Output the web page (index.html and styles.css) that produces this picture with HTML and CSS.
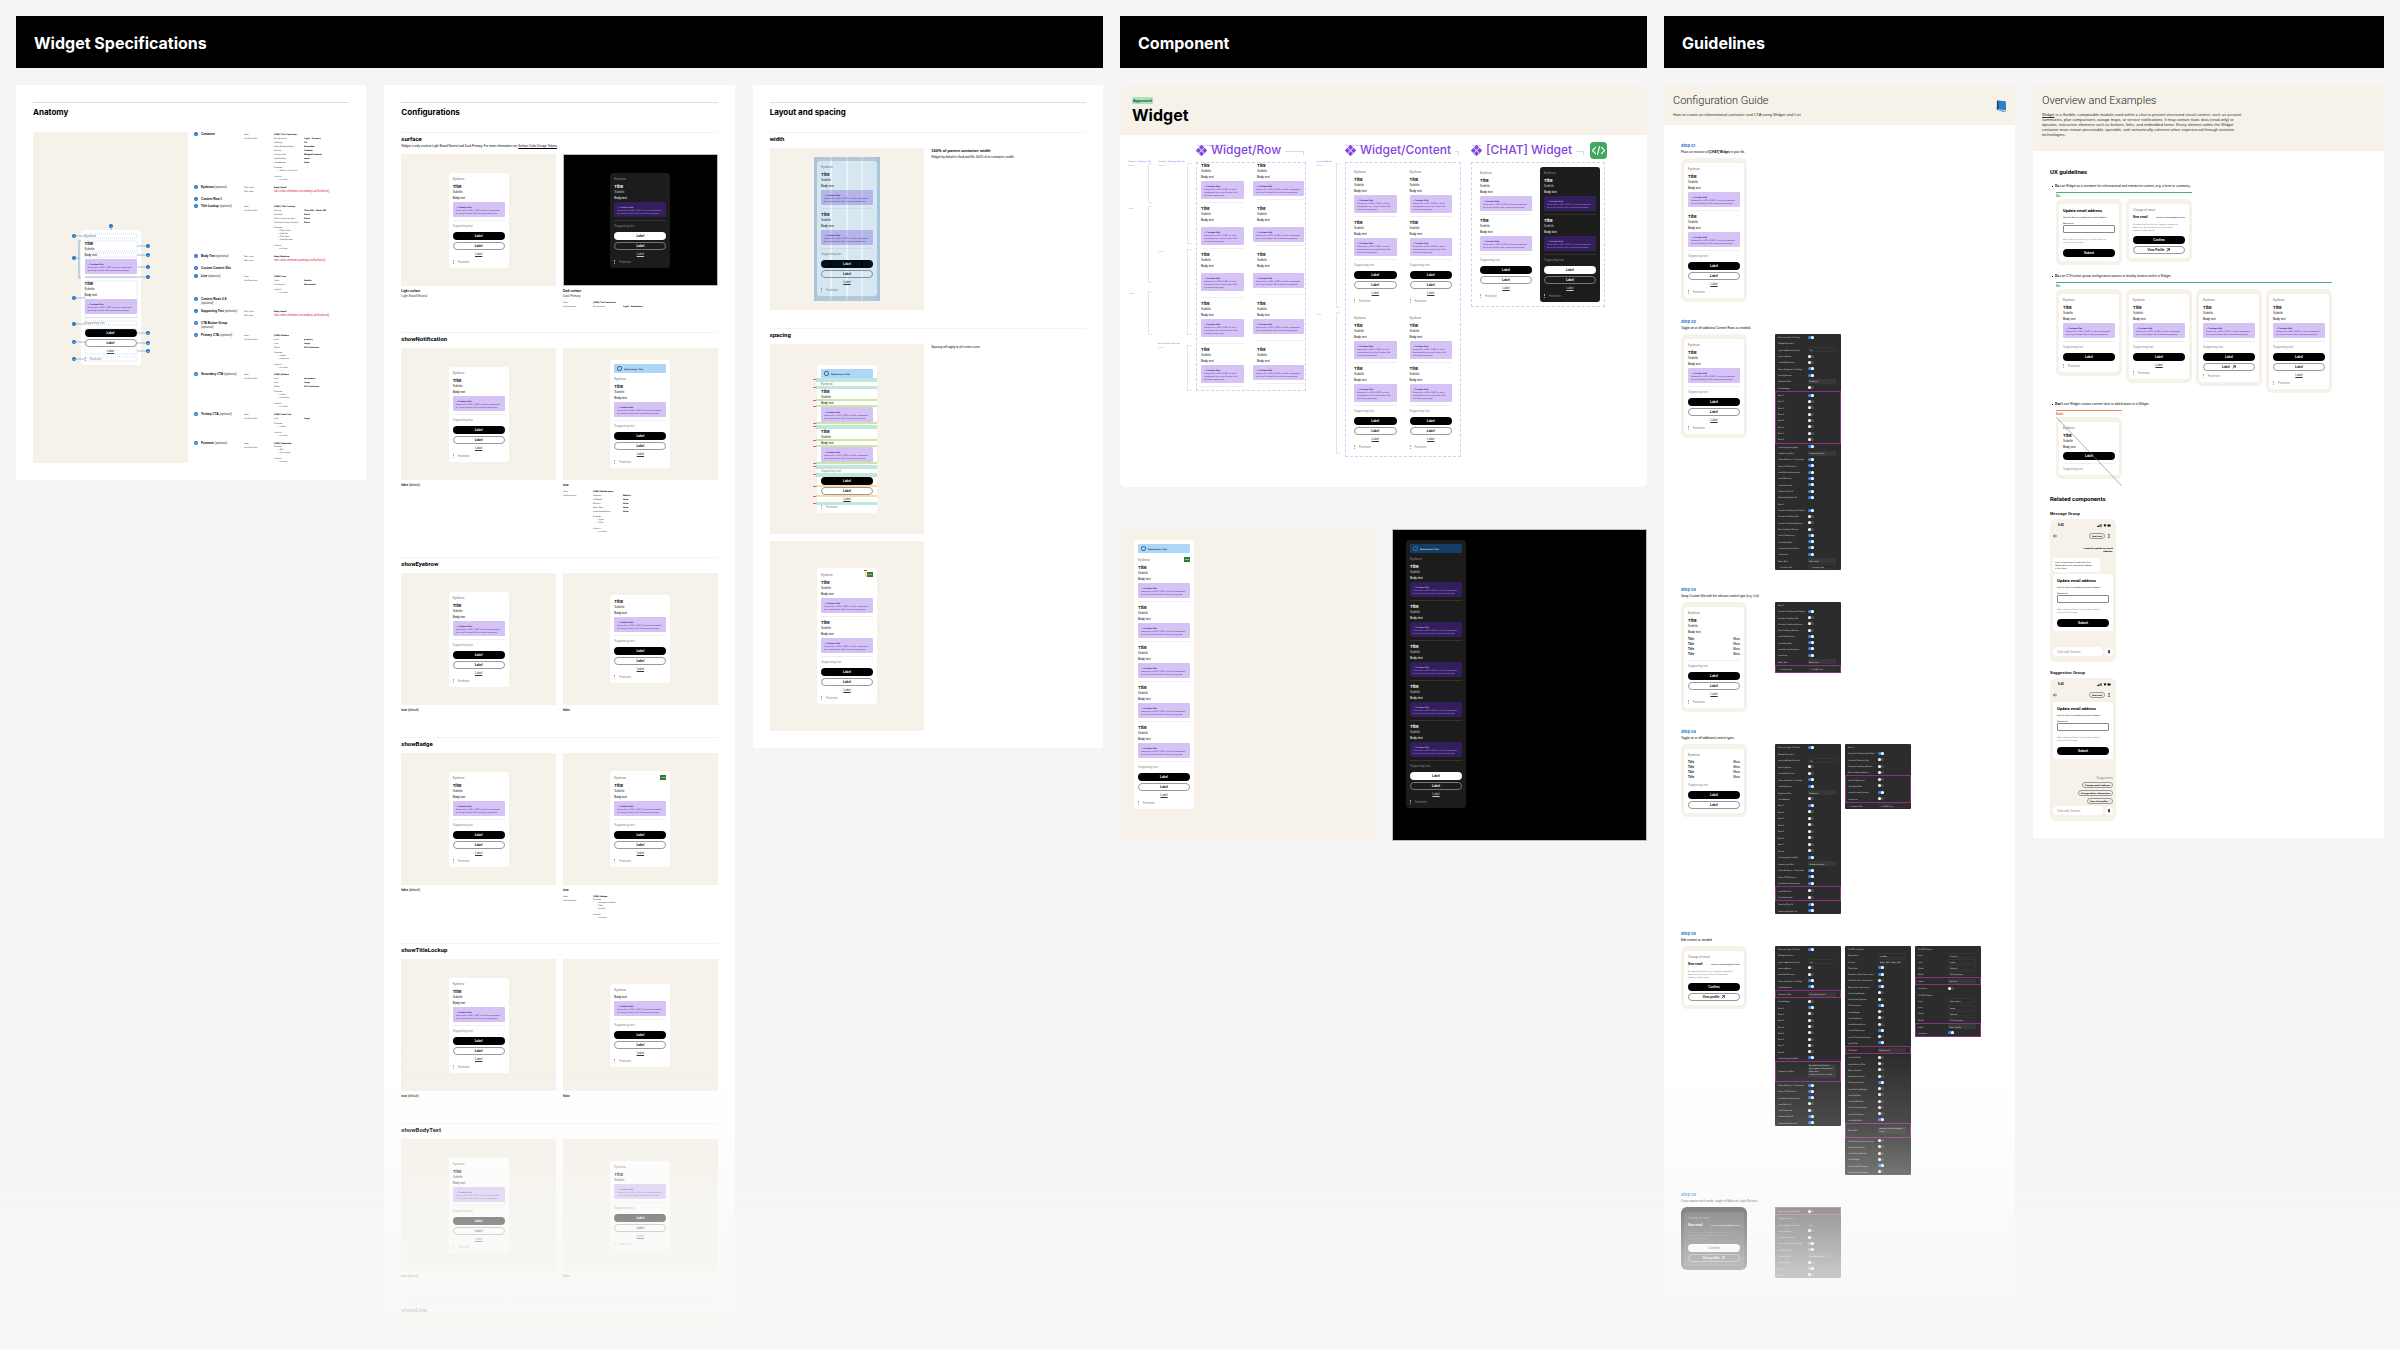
FILE: index.html
```html
<!DOCTYPE html>
<html lang="en">
<head>
  <meta charset="UTF-8" />
  <meta name="viewport" content="width=device-width, initial-scale=1.0" />
  <title>Widget Specifications</title>
  <link rel="stylesheet" href="styles.css">
</head>
<body>
  <main class="board">
    <section class="area">
      <h1 class="area-title">Widget Specifications</h1>
      <div class="area-cols three">

        <article class="sheet">
          <h2>Anatomy</h2>
          <div class="anatomy">
            <div class="stage stage-anatomy">
              <div class="callouts">
                <div class="widget" data-show="eyebrow row row support primary secondary link footnote"></div>
                <svg id="anatomy-marks" class="overlay" width="60" height="135" viewBox="0 0 60 135"></svg>
              </div>
            </div>
            <div class="specs" id="anatomy-specs"></div>
          </div>
        </article>

        <article class="sheet sheet-open">
          <h2>Configurations</h2>
          <div id="configs"></div>
        </article>

        <article class="sheet">
          <h2>Layout and spacing</h2>
          <section class="block tight">
            <h3>width</h3>
            <div class="pair">
              <div class="stage stage-width">
                <div class="device">
                  <div class="widget" data-show="eyebrow row row support primary secondary link footnote"></div>
                  <div class="columns"><i></i><i></i><i></i><i></i></div>
                </div>
              </div>
              <div class="note">
                <h4>100% of parent container width</h4>
                <p>Widget by default is fluid and fills 100% of its container's width.</p>
              </div>
            </div>
          </section>
          <section class="block tight">
            <h3>spacing</h3>
            <div class="pair">
              <div class="stack">
                <div class="stage stage-spacing">
                  <div class="callouts">
                    <div class="widget" data-show="notification eyebrow row row support primary secondary link footnote"></div>
                    <svg id="spacing-marks" class="overlay" width="60" height="148" viewBox="0 0 60 148"></svg>
                  </div>
                </div>
                <div class="stage stage-spacing">
                  <div class="callouts">
                    <div class="widget" data-show="badge eyebrow row row support primary secondary link footnote"></div>
                    <svg class="overlay" width="60" height="136" viewBox="0 0 60 136">
                      <rect x="48" y="4" width="1" height="5" fill="#f3c978"/>
                      <rect x="47" y="2" width="3" height="1" fill="#d2353f"/>
                    </svg>
                  </div>
                </div>
              </div>
              <div class="note"><p>Spacing will apply to all screen sizes.</p></div>
            </div>
          </section>
        </article>

      </div>
    </section>

    <section class="area">
      <h1 class="area-title">Component</h1>
      <article class="component">
        <header class="component-head">
          <span class="approved">Approved</span>
          <h2>Widget</h2>
        </header>
        <div class="canvas">
          <svg class="axis" width="64" height="257" viewBox="0 0 64 257">
            <g class="axis-name"><text x="0" y="27">Content Padding Top</text><text x="30" y="27">Content Padding Bottom</text><text x="30" y="209">Row Padding Bottom</text></g>
            <g class="axis-value"><text x="0" y="31">false</text><text x="30" y="31">false</text><text x="0" y="74">true</text><text x="30" y="117">true</text><text x="0" y="159">false</text><text x="30" y="213">true</text></g>
            <g class="axis-line"><path d="M24 28.5H20.500V67.500H24M24 71.500H20.500V147.500H24M24 156.500H20.500V199.500H24"/><path d="M64 28.500H59.500V108.500H64M64 114.500H59.500V199.500H64M64 210.500H59.500V255.500H64"/></g>
          </svg>
          <div class="set set-row">
            <h3 class="set-title"><svg class="comp-icon" viewBox="0 0 12 12"><use href="#component"/></svg><span>Widget/Row</span></h3>
            <small class="set-axis">Content Padding Left Right</small>
            <div class="frame rows" id="rows"></div>
          </div>
          <svg class="axis axis-gap" width="25" height="325" viewBox="0 0 25 325">
            <g class="axis-name"><text x="0" y="27">isLastEyebrow</text></g>
            <g class="axis-value"><text x="0" y="31">false</text><text x="0" y="180">true</text></g>
            <g class="axis-line"><path d="M24 28.500H20.500V172.500H24M24 177.500H20.500V318.500H24"/></g>
          </svg>
          <div class="set set-content">
            <h3 class="set-title"><svg class="comp-icon" viewBox="0 0 12 12"><use href="#component"/></svg><span>Widget/Content</span></h3>
            <small class="set-axis">Padding Bottom</small>
            <div class="frame contents">
              <div class="widget narrow" data-show="eyebrow row row support primary secondary link footnote"></div>
              <div class="widget narrow" data-show="eyebrow row row support primary secondary link footnote"></div>
              <div class="widget narrow" data-show="eyebrow row row support primary secondary link footnote"></div>
              <div class="widget narrow" data-show="eyebrow row row support primary secondary link footnote"></div>
            </div>
          </div>
          <div class="set set-chat">
            <h3 class="set-title"><svg class="comp-icon" viewBox="0 0 12 12"><use href="#component"/></svg><span>[CHAT] Widget</span>
              <svg class="code-icon" viewBox="0 0 17 17"><rect width="17" height="17" rx="4" fill="#41a85f"/><path d="M5.500 5.300 2.500 8.500l3 3.200M11.500 5.300l3 3.200-3 3.200M9.600 4.500 7.400 12.500" fill="none" stroke="#fff" stroke-width="1.100" stroke-linecap="round" stroke-linejoin="round"/></svg>
            </h3>
            <small class="set-axis">Surface</small>
            <div class="frame chat">
              <div class="widget" data-show="eyebrow row row support primary secondary link footnote"></div>
              <div class="widget dark" data-show="eyebrow row row support primary secondary link footnote"></div>
            </div>
          </div>
        </div>
      </article>
      <div class="surfaces">
        <div class="surface">
          <div class="widget" data-show="notification badge eyebrow row row row row row support primary secondary link footnote"></div>
        </div>
        <div class="surface surface-dark">
          <div class="widget dark" data-show="notification eyebrow row row row row row support primary secondary link footnote"></div>
        </div>
      </div>
    </section>

    <section class="area">
      <h1 class="area-title">Guidelines</h1>
      <div class="area-cols two">

        <article class="guide">
          <header class="guide-head">
            <div>
              <h2>Configuration Guide</h2>
              <p>How to create an informational container and CTA using Widget and List.</p>
            </div>
            <svg class="book" viewBox="0 0 20 22"><path d="M2 1 17 2.500 18.500 20.500 13 21.500 1.500 18Z" fill="#1f5f9e"/><path d="M4 1.200 17.500 2.700 18 19 5 17Z" fill="#2f80c8"/><path d="M1.500 2 4 1.200 5 17 1.500 18Z" fill="#17456f"/><path d="M5 17 18 19v1.500L2 18Z" fill="#d9e6f0"/></svg>
          </header>
          <div class="steps" id="steps"></div>
        </article>

        <article class="guide">
          <header class="guide-head">
            <div>
              <h2>Overview and Examples</h2>
              <p><a href="#">Widget</a> is a flexible, composable module used within a chat to present structured visual content, such as account<br>summaries, plan comparisons, outage maps, or service notifications. It may contain static data (read-only) or<br>dynamic, interactive elements such as buttons, links, and embedded forms. Every element within the Widget<br>container must remain perceivable, operable, and semantically coherent when experienced through assistive<br>technologies.</p>
            </div>
          </header>
          <div class="overview">
            <h3>UX guidelines</h3>
            <ul>
              <li>
                <p><b>Do</b> use Widget as a container for informational and interactive content (e.g. a form or summary).</p>
                <div class="verdict do">
                  <span>Do</span>
                  <div class="examples">
                    <div class="bezel"><div class="widget" data-show="form"></div></div>
                    <div class="bezel"><div class="widget" data-show="change profile"></div></div>
                  </div>
                </div>
              </li>
              <li>
                <p><b>Do</b> use CTA button group configuration options to display buttons within a Widget.</p>
                <div class="verdict do">
                  <span>Do</span>
                  <div class="examples">
                    <div class="bezel"><div class="widget" data-show="eyebrow row support primary footnote"></div></div>
                    <div class="bezel"><div class="widget" data-show="eyebrow row support primary link footnote"></div></div>
                    <div class="bezel"><div class="widget" data-show="eyebrow row support primary external footnote"></div></div>
                    <div class="bezel"><div class="widget" data-show="eyebrow row support primary secondary link footnote"></div></div>
                  </div>
                </div>
              </li>
              <li>
                <p><b>Don't</b> use Widget custom content slots to add buttons to a Widget.</p>
                <div class="verdict dont">
                  <span>Don't</span>
                  <div class="examples">
                    <div class="bezel">
                      <div class="widget" data-show="eyebrow buttonrow support"></div>
                      <svg class="overlay strike" width="66" height="69" viewBox="0 0 66 69"><path d="M0 0 66 69" stroke="#777" stroke-width=".6"/></svg>
                    </div>
                  </div>
                </div>
              </li>
            </ul>
            <h3>Related components</h3>
            <h4>Message Group</h4>
            <div class="phone" data-phone="message"></div>
            <h4>Suggestion Group</h4>
            <div class="phone" data-phone="suggestion"></div>
          </div>
        </article>

      </div>
    </section>
  </main>
  <div class="fade"></div>

  <svg class="defs" width="0" height="0">
    <symbol id="component" viewBox="0 0 12 12">
      <path d="M6 0 8.600 2.600 6 5.200 3.400 2.600ZM6 6.800 8.600 9.400 6 12 3.400 9.400ZM0 6 2.600 3.400 5.200 6 2.600 8.600ZM6.800 6 9.400 3.400 12 6 9.400 8.600Z" fill="#7f45e0" stroke="#7f45e0" stroke-width=".5" stroke-linejoin="round"/>
    </symbol>
  </svg>
  <script src="script.js"></script>
</body>
</html>
```

FILE: styles.css
```css
* {
  box-sizing: border-box;
}
body {
  margin: 0;
  background: #f5f5f5;
  color: #000;
  font-family: "Liberation Sans", Arial, sans-serif;
  font-size: 3px;
  line-height: 4px;
}
h1, h2, h3, h4, p, ul {
  margin: 0;
  padding: 0;
}
button, input, select {
  font: inherit;
  color: inherit;
  margin: 0;
  padding: 0;
  border: 0;
  min-width: 0;
}
a {
  color: inherit;
}
.board {
  display: grid;
  grid-template-columns: 1087fr 527fr 720fr;
  align-items: start;
  gap: 17px;
  padding: 16px 16px 0;
}
.area {
  min-width: 0;
}
.area-title {
  background: #000;
  color: #fff;
  padding: 17px 18px 15px;
  margin-bottom: 17px;
  font: bold 16px/20px "Inter", "Liberation Sans", sans-serif;
}
.area-cols {
  display: grid;
  gap: 18px;
  align-items: start;
}
.three {
  grid-template-columns: repeat(3, minmax(0, 1fr));
}
.two {
  grid-template-columns: repeat(2, minmax(0, 1fr));
}

/* white sheets */
.sheet {
  background: #fff;
  padding: 17px;
}
.sheet-open {
  padding-bottom: 0;
}
.sheet > h2 {
  border-top: 1px solid #dedede;
  padding-top: 3px;
  margin-bottom: 14px;
  font: bold 8px/12px "Inter", "Liberation Sans", sans-serif;
}
.block {
  border-top: 1px solid #f3f3f3;
  padding: 2px 0 24px;
}
.block h3, .overview h3 {
  font: bold 6px/8px "Roboto", "Liberation Sans", sans-serif;
  margin-bottom: 5px;
}
.block .lead {
  line-height: 6px;
  margin: -5px 0 5px;
}
.pair {
  display: grid;
  grid-template-columns: repeat(2, minmax(0, 1fr));
  gap: 7px;
}
.stage {
  display: flex;
  align-items: center;
  justify-content: center;
  min-height: 132px;
  background: #f6f2ea;
}
.stage-dark {
  background: #000;
  border: 1px solid #bbb;
}
.stage-anatomy {
  min-height: 331px;
}
.stage-width {
  min-height: 162px;
}
.stage-spacing {
  min-height: 190px;
}
.stack {
  display: grid;
  gap: 7px;
}
.tight {
  padding-bottom: 18px;
}
.tight:last-child {
  padding-bottom: 0;
}
.preview {
  padding-bottom: 0;
}
.preview .stage {
  min-height: 12px;
}
.note h4 {
  font-size: 4px;
  line-height: 6px;
}
.note p {
  line-height: 6px;
}
.caption {
  margin-top: 3px;
  line-height: 5px;
}
.caption p {
  color: #333;
}

/* anatomy */
.anatomy {
  display: grid;
  grid-template-columns: 155px 1fr;
  gap: 6px;
}
.specs {
  display: flex;
  flex-direction: column;
  justify-content: space-between;
  min-width: 0;
}
.spec {
  display: grid;
  grid-template-columns: 7px 43px 30px 1fr;
  font: 2px/4px "DejaVu Sans", sans-serif;
}
.block .spec {
  grid-template-columns: 30px 1fr;
  margin: 1px 0 0;
}
.spec .name {
  font: 3px/4px "Liberation Sans", Arial, sans-serif;
}
.spec .name span, .spec .uses, .spec dt {
  color: #333;
}
.spec dl {
  margin: 0;
  display: grid;
  grid-template-columns: 30px 1fr;
}
.spec dd {
  margin: 0;
  font-weight: bold;
  white-space: nowrap;
}
.spec dt {
  white-space: nowrap;
}
.spec .lists {
  margin-top: 2px;
  line-height: 3px;
  color: #333;
}
.spec .flush {
  margin-top: 0;
}
.spec .lists div {
  margin-left: 4px;
}
.spec .inherits {
  margin-top: 3px;
}
.spec .token {
  color: #d6202f;
  font: 3px/4px "Liberation Sans", Arial, sans-serif;
  white-space: nowrap;
}
.marker {
  width: 4px;
  height: 4px;
  border-radius: 2px;
  background: #1f6fc4;
  color: #fff;
  text-align: center;
}
.callouts, .device, .bezel {
  position: relative;
}
.overlay {
  position: absolute;
  left: 0;
  top: 0;
  overflow: visible;
}
.overlay text {
  font-size: 2px;
  fill: #fff;
  text-anchor: middle;
}
.device {
  width: 66px;
  padding: 4px 3px 5px;
  background: rgba(0, 100, 180, .15);
}
.device::before {
  content: "";
  position: absolute;
  inset: 0;
  border: solid rgba(0, 100, 190, .2);
  border-width: 0 3px;
}
.columns {
  position: absolute;
  inset: 0 3px;
  display: grid;
  grid-template-columns: repeat(4, 1fr);
  gap: 2px;
  background: rgba(0, 100, 175, .07);
}
.columns i {
  background: rgba(0, 100, 175, .09);
}

/* widget */
.widget {
  width: 60px;
  padding: 4px;
  border-radius: 3px;
  background: #fff;
}
.narrow {
  width: auto;
}
.widget > *, .w-row > * {
  margin-top: 3px;
}
.widget > :first-child, .w-row > :first-child {
  margin-top: 0;
}
.w-notification {
  height: 9px;
  display: flex;
  align-items: center;
  gap: 2px;
  padding-left: 3px;
  border-radius: 1px;
  background: #aed6f7;
  color: #12395c;
  font: bold 2px/4px "DejaVu Sans", sans-serif;
}
.w-notification::before {
  content: "";
  width: 3px;
  height: 3px;
  border: 1px solid #3c6d97;
  border-radius: 2px;
}
.widget > .w-notification + * {
  margin-top: 4px;
}
.w-eyebrow {
  display: flex;
  justify-content: space-between;
  align-items: center;
  color: #777;
}
.w-badge {
  padding: 0 1px;
  background: #2b7a37;
  color: #fff;
  font: bold 2px/5px "Liberation Sans", sans-serif;
}
.w-title {
  font: bold 4px/5px "Inter", "Liberation Sans", sans-serif;
}
.w-row > .w-subtitle {
  margin-top: 1px;
  color: #222;
}
.w-row > .w-body, .w-row > .w-slot {
  margin-top: 2px;
}
.w-row > .w-body:first-child, .w-row > .w-slot:first-child {
  margin-top: 0;
}
.w-slot {
  padding: 3px 3px 2px;
  background: #d6c3f5;
  border-radius: 1px;
  color: #4a1a94;
  font: 2px/3px "DejaVu Sans", sans-serif;
}
.w-slot b {
  display: block;
  font: bold 2px/4px "DejaVu Sans", sans-serif;
}
.w-slot p {
  white-space: nowrap;
}
.w-line {
  height: 1px;
  background: #efefef;
}
.w-support, .w-footnote {
  color: #888;
}
.w-fine {
  color: #777;
  font: 2px/3px "DejaVu Sans", sans-serif;
  white-space: nowrap;
}
.widget > .w-cta {
  margin-top: 4px;
}
.w-cta {
  display: grid;
  gap: 2px;
}
.btn {
  display: flex;
  align-items: center;
  justify-content: center;
  gap: 2px;
  width: 100%;
  height: 8px;
  border-radius: 4px;
  background: #000;
  color: #fff;
  font-weight: bold;
}
.btn svg {
  width: 4px;
  height: 4px;
}
.btn-secondary {
  background: #fff;
  color: #000;
  border: 1px solid #999;
}
.w-link {
  line-height: 5px;
  text-align: center;
  color: #333;
}
.w-footnote {
  display: flex;
  gap: 3px;
}
.w-footnote::before {
  content: "";
  width: 1px;
  border-left: 1px dotted #aaa;
}
.w-list {
  display: grid;
  grid-template-columns: 1fr auto;
  line-height: 5px;
}
.w-pairline {
  display: flex;
  justify-content: space-between;
  line-height: 5px;
  white-space: nowrap;
}
.w-pairline span {
  font: 2px/5px "DejaVu Sans", sans-serif;
}
.w-form {
  display: grid;
}
.w-form h5 {
  margin: 0;
  font: bold 4px/5px "Roboto", "Liberation Sans", sans-serif;
  white-space: nowrap;
}
.w-form p {
  margin-top: 2px;
  font: 2px/4px "DejaVu Sans", sans-serif;
  white-space: nowrap;
}
.w-form label {
  margin-top: 2px;
  font: 2px/4px "DejaVu Sans", sans-serif;
}
.w-form input {
  width: 100%;
  height: 8px;
  border: 1px solid #888;
  border-radius: 1px;
  background: #fff;
}
.w-form .w-fine {
  margin: 5px 0;
}
.dark {
  background: #1c1c1c;
  color: #fff;
}
.dark .w-notification {
  background: #143e64;
  color: #b9d8f2;
}
.dark .w-slot {
  background: #331f5c;
  color: #b79df0;
}
.dark .w-line {
  background: #333;
}
.dark .w-subtitle, .dark .w-link {
  color: #ccc;
}
.dark .w-eyebrow, .dark .w-support, .dark .w-footnote {
  color: #888;
}
.dark .btn {
  background: #fff;
  color: #000;
}
.dark .btn-secondary {
  background: #1c1c1c;
  color: #fff;
  border-color: #777;
}

/* component page */
.component {
  background: #fff;
  border-radius: 6px;
  overflow: hidden;
  padding-bottom: 27px;
  margin-bottom: 42px;
}
.component-head {
  background: #f6f2ea;
  height: 50px;
  padding: 12px;
}
.component-head h2 {
  margin-top: 1px;
  font: bold 16px/20px "Inter", "Liberation Sans", sans-serif;
}
.approved {
  display: block;
  width: fit-content;
  padding: 0 1px;
  border-radius: 1px;
  background: #a9e3b9;
  color: #17452a;
  font-size: 4px;
  line-height: 7px;
  font-weight: bold;
}
.canvas {
  display: flex;
  align-items: flex-start;
  padding-left: 8px;
}
.axis {
  flex: none;
  margin-right: 4px;
}
.axis-gap {
  margin-left: 10px;
}
.axis text {
  font: 2px "DejaVu Sans Mono", monospace;
}
.axis-name {
  fill: #8a4fe8;
}
.axis-value {
  fill: #999;
}
.axis-line {
  fill: none;
  stroke: #e4e4e4;
}
.set {
  position: relative;
  flex: none;
  padding-top: 8px;
}
.set-title {
  display: flex;
  align-items: center;
  gap: 4px;
  height: 14px;
  margin-bottom: 5px;
  color: #7f45e0;
  font: 500 12px/14px "Inter", "Liberation Sans", sans-serif;
  white-space: nowrap;
}
.set-title::after {
  content: "";
  flex: 1;
  height: 3px;
  margin: 5px 2px 0 0;
  border: solid #ddd;
  border-width: 1px 1px 0 0;
}
.comp-icon {
  width: 11px;
  height: 11px;
}
.code-icon {
  order: 2;
  width: 17px;
  height: 17px;
  margin-right: -2px;
}
.set-axis {
  position: absolute;
  left: 1px;
  top: 8px;
  color: #8a4fe8;
  font: 2px/4px "DejaVu Sans Mono", monospace;
}
.set-row {
  width: 110px;
}
.set-content {
  width: 116px;
}
.set-chat {
  width: 134px;
  margin-left: 10px;
}
.frame {
  display: grid;
  border: 1px dashed #d9c8fb;
  border-radius: 1px;
}
.rows {
  grid-template-columns: 43px 51px;
  gap: 3px 9px;
  padding: 0 0 3px 4px;
}
.rows .w-row:nth-child(even) > :not(.w-slot) {
  margin-left: 4px;
}
.rows .pad-slot .w-slot {
  margin-top: 5px;
}
.rows .pad-line .w-line {
  margin-top: 6px;
}
.contents {
  grid-template-columns: repeat(2, 1fr);
  gap: 5px;
  padding: 3px 4px;
}
.chat {
  grid-template-columns: 60px 60px;
  gap: 4px;
  padding: 4px;
}
.surfaces {
  display: grid;
  grid-template-columns: repeat(2, minmax(0, 1fr));
  gap: 17px;
}
.surface {
  min-height: 312px;
  padding: 11px 14px;
  background: #f6f2ea;
}
.surface-dark {
  background: #000;
  border: 1px solid #bbb;
  padding: 10px 13px;
}

/* guidelines */
.guide {
  background: #fff;
}
.guide-head {
  display: flex;
  justify-content: space-between;
  align-items: center;
  padding: 9px 8px 8px 9px;
  background: #f6f2ea;
}
.guide-head h2 {
  color: #222;
  font: 300 11px/14px "Roboto", "Liberation Sans", sans-serif;
}
.guide-head p {
  margin-top: 4px;
  color: #333;
  font-size: 4px;
  line-height: 5px;
}
.book {
  width: 11px;
  height: 12px;
}
.overview {
  padding: 17px;
}
.guide:last-child .guide-head {
  padding-bottom: 14px;
}
.steps {
  display: grid;
  gap: 17px;
  padding: 18px 17px 17px;
}
.step h3 {
  color: #1f78c8;
  font: bold 4px/6px "Inter", "Liberation Sans", sans-serif;
}
.step > p {
  line-height: 6px;
  margin-bottom: 3px;
}
.step-body {
  display: flex;
  align-items: flex-start;
  gap: 4px;
}
.step-body .bezel {
  margin-right: 24px;
}
.bezel {
  width: 66px;
  padding: 5px 3px 4px;
  border-radius: 6px;
  background: #f6f2ea;
}
.bezel-dark {
  background: #000;
}
.props {
  display: flex;
  flex-direction: column;
  width: 66px;
  background: #2c2c2c;
  border-radius: 1px;
  color: #d0d0d0;
  font: 2px/4px "DejaVu Sans", sans-serif;
}
.prop {
  flex: 1;
  display: grid;
  grid-template-columns: 30px 28px;
  align-items: center;
  min-height: 0;
  padding-left: 3px;
  white-space: nowrap;
}
.prop-tall {
  flex: 3;
}
.prop-mid {
  flex: 2;
}
.picked {
  box-shadow: inset 1px 0 #8e2f80, inset -1px 0 #8e2f80;
}
.picked-first {
  border-top: 1px solid #8e2f80;
}
.picked-last {
  border-bottom: 1px solid #8e2f80;
}
.prop input[type="checkbox"] {
  appearance: none;
  display: flex;
  width: 6px;
  height: 3px;
  border-radius: 2px;
  background: #4a4a4a;
}
.prop input[type="checkbox"]::before {
  content: "";
  width: 3px;
  height: 3px;
  border-radius: 2px;
  background: #fff;
}
.prop input[type="checkbox"]:checked {
  justify-content: flex-end;
  background: #3b86e8;
}
.prop input[type="text"], .prop textarea, .prop select {
  appearance: none;
  width: 28px;
  height: 5px;
  margin: 0;
  padding: 0 1px;
  border: 0;
  border-radius: 1px;
  background: #383838;
  color: #ddd;
  font: 2px/4px "DejaVu Sans", sans-serif;
}
.prop textarea {
  height: 14px;
  resize: none;
  overflow: hidden;
  line-height: 3px;
}
.prop-mid textarea {
  height: 7px;
}
.prop select {
  background: #2c2c2c;
  border: 1px solid #363636;
}
.overview ul {
  list-style: none;
  margin-top: 8px;
}
.overview > h3 {
  margin-bottom: 0;
}
.overview ul + h3 {
  margin-top: 16px;
}
.overview li {
  position: relative;
  padding-left: 6px;
}
.overview li::before {
  content: "";
  position: absolute;
  left: 2px;
  top: 2px;
  width: 1px;
  height: 1px;
  background: #000;
}
.overview li + li {
  margin-top: 9px;
}
.overview li > p {
  margin-left: -1px;
  font: 3px/5px "Inter", "Liberation Sans", sans-serif;
}
.verdict {
  width: fit-content;
  margin-top: 3px;
  border-top: 1px solid #4caf6e;
  color: #1f8a43;
}
.verdict > span {
  display: block;
  margin: 1px 0;
  font-weight: bold;
}
.dont {
  border-color: #e08a5b;
  color: #d2552a;
}
.examples {
  display: flex;
  align-items: flex-start;
  gap: 4px;
  color: #000;
}
.overview h4 {
  margin: 8px 0 3px;
  font-size: 4px;
  line-height: 5px;
}
.phone {
  display: flex;
  flex-direction: column;
  width: 66px;
  height: 143px;
  padding: 4px 3px 6px;
  border-radius: 6px;
  background: #f6f2ea;
}
.status, .toolbar, .composer {
  display: flex;
  align-items: center;
}
.status {
  justify-content: space-between;
  padding: 0 2px 0 5px;
  font-weight: bold;
}
.status svg {
  width: 14px;
  height: 3px;
}
.toolbar {
  margin-top: 6px;
  height: 6px;
  justify-content: space-between;
}
.toolbar svg {
  width: 4px;
  height: 4px;
}
.toolbar .pill {
  margin-left: auto;
}
.toolbar .dots {
  margin: 0 2px;
}
.pill {
  height: 6px;
  padding: 0 2px;
  border: 1px solid #999;
  border-radius: 3px;
  background: #f6f2ea;
  font: bold 2px/4px "DejaVu Sans", sans-serif;
}
.mine {
  margin-top: 8px;
  text-align: right;
  font: bold 2px/3px "DejaVu Sans", sans-serif;
}
.theirs {
  width: 47px;
  margin: 5px 0 2px;
  padding: 3px 2px 2px;
  border-radius: 3px;
  background: #fff;
  font: 2px/3px "DejaVu Sans", sans-serif;
  white-space: nowrap;
}
.suggestions {
  display: grid;
  justify-items: end;
  gap: 2px;
  margin: auto 0 2px;
  color: #888;
}
.suggestions .pill {
  color: #000;
}
.composer {
  margin-top: auto;
  justify-content: space-between;
}
.suggestions + .composer {
  margin-top: 0;
}
[data-phone="suggestion"] .widget {
  margin-top: 4px;
}
.composer input {
  width: 50px;
  height: 9px;
  padding: 0 4px;
  border-radius: 5px;
  background: #fff;
}
.composer input::placeholder {
  color: #888;
}
.composer button {
  width: 8px;
  height: 8px;
  padding: 2px;
  border-radius: 4px;
  background: #fff;
}
.composer svg {
  display: block;
  width: 4px;
  height: 4px;
}
.fade {
  position: fixed;
  inset: 0;
  pointer-events: none;
  background: linear-gradient(rgba(247, 247, 245, 0) 78%, rgba(247, 247, 245, .15) 83%, rgba(247, 247, 245, .36) 87%, rgba(247, 247, 245, .56) 90%, rgba(247, 247, 245, .75) 94%, rgba(247, 247, 245, .85) 97%, #f7f7f5 99%);
}
.defs {
  position: absolute;
}
```

FILE: script.js
```js
const arrow = '<svg viewBox="0 0 6 6"><path d="M1 5 5 1M1.500 1H5v3.500" fill="none" stroke="currentColor"/></svg>';

const slotWide = ['Swap with a VDS, CHAT, or local component', 'by using Custom Slot instance swap prop.'];
const slotNarrow = ['Swap with a VDS, CHAT, or local', 'component by using Custom Slot', 'instance swap prop.'];

function slot(lines) {
  return `<div class="w-slot"><b>‹› Custom Slot</b>${lines.map(l => `<p>${l}</p>`).join('')}</div>`;
}

function row(has, lines) {
  return `<div class="w-row">
    ${has('notitle') ? '' : '<div class="w-title">Title</div><div class="w-subtitle">Subtitle</div>'}
    ${has('nobody') ? '' : '<div class="w-body">Body text</div>'}
    ${slot(lines)}
    <div class="w-line"></div>
  </div>`;
}

const list = `<div class="w-list">${'<b>Title</b><span>Meta</span>'.repeat(4)}</div>`;

let formCount = 0;

// data-show lists the parts of the widget from top to bottom
function renderWidget(el) {
  const parts = el.dataset.show.split(' ');
  const has = p => parts.includes(p);
  const lines = el.classList.contains('narrow') ? slotNarrow : slotWide;
  let html = '';
  let cta = '';
  let foot = '';
  parts.forEach(part => {
    if (part === 'notification') html += '<div class="w-notification">Notification Title</div>';
    if (part === 'eyebrow') html += `<div class="w-eyebrow">Eyebrow${has('badge') ? '<span class="w-badge">Text</span>' : ''}</div>`;
    if (part === 'row') html += row(has, lines);
    if (part === 'list') html += list;
    if (part === 'listrow') html += `<div class="w-row"><div class="w-title">Title</div><div class="w-subtitle">Subtitle</div><div class="w-body">Body text</div>${list}<div class="w-line"></div></div>`;
    if (part === 'buttonrow') html += '<div class="w-row"><div class="w-title">Title</div><div class="w-subtitle">Subtitle</div><div class="w-body">Body text</div><button class="btn">Label</button><div class="w-line"></div></div>';
    if (part === 'support') html += '<div class="w-support">Supporting text</div>';
    if (part === 'change') {
      html += '<div class="w-eyebrow">Change of email</div><div class="w-pairline"><b>New email</b><span>verizoncustomer@gmail.com</span></div><div class="w-fine">By selecting Confirm you agree to receive all<br>electronic communications at the email<br>address listed above.</div>';
      cta += `<button class="btn">Confirm</button><button class="btn btn-secondary">View ${has('profile') ? 'Profile' : 'profile'} ${arrow}</button>`;
    }
    if (part === 'form') {
      const id = 'email-' + (++formCount);
      html += `<div class="w-form"><h5>Update email address</h5><p>Use this form to update your email address.</p>
        <label for="${id}">New email</label><input id="${id}" type="text">
        <div class="w-fine">After selecting Submit you will be asked to<br>confirm this change.</div>
        <button class="btn">Submit</button></div>`;
    }
    if (part === 'primary') cta += '<button class="btn">Label</button>';
    if (part === 'secondary') cta += '<button class="btn btn-secondary">Label</button>';
    if (part === 'external') cta += `<button class="btn btn-secondary">Label ${arrow}</button>`;
    if (part === 'link') cta += '<a class="w-link" href="#">Label</a>';
    if (part === 'footnote') foot = '<div class="w-footnote">Footnote</div>';
  });
  if (cta) html += `<div class="w-cta">${cta}</div>`;
  el.innerHTML = html + foot;
}

// spec lists
function specBody(s) {
  if (s.style) {
    return `<div class="uses">Text style<br>Text color</div><div><b>${s.style}</b><div class="token">${s.token}</div></div>`;
  }
  if (!s.uses) return '';
  const rows = s.rows || [];
  let html = `<div class="uses">Uses<br>Configuration</div><div><b>${s.uses}</b>`;
  if (rows.length) html += `<dl>${rows.map(r => `<dt>${r[0]}</dt><dd>${r[1]}</dd>`).join('')}</dl>`;
  if (s.exposes || s.inherits) {
    html += `<div class="lists${rows.length ? '' : ' flush'}">`;
    if (s.exposes) html += '<p>Exposes</p>' + s.exposes.map(e => `<div>• ${e}</div>`).join('');
    if (s.inherits) html += `<p class="${s.exposes ? 'inherits' : ''}">Inherits</p><div>• surface</div>`;
    html += '</div>';
  }
  return html + '</div>';
}

const button = kind => ({
  opt: '(optional)', uses: '[VDS] Button', rows: [['kind', kind], ['size', 'large'], ['Width', 'Fill Container']],
  exposes: ['Label', 'showIcon'], inherits: true
});

const anatomy = [
  { name: 'Container', uses: '[VDS] Tile Container', rows: [['Background', 'Light - Primary'], ['Padding', '16'], ['Show Border Radius', 'Rounded'], ['Activity', 'Custom'], ['Custom Slot', 'Widget/Content'], ['dropShadow', 'none'], ['showBorder', 'false']], exposes: ['Radius and Focus'], inherits: true },
  { name: 'Eyebrow', opt: '(optional)', style: 'Body Small', token: 'vds-color-element-secondary-onSurface()' },
  { name: 'Content Row 1' },
  { name: 'Title Lockup', opt: '(optional)', uses: '[VDS] Title Lockup', rows: [['Pairing', 'Title SM + Body SM'], ['Eyebrow', 'False'], ['Title Custom Content', 'False'], ['Subtitle Custom Content', 'False']], exposes: ['Title State', 'Subtitle', 'Title Item', 'Subtitle Item'], inherits: true },
  { name: 'Body Text', opt: '(optional)', style: 'Body Medium', token: 'vds-color-element-primary-onSurface()' },
  { name: 'Custom Content Slot' },
  { name: 'Line', opt: '(optional)', uses: '[VDS] Line', rows: [['Color', 'Subtle'], ['Orientation', 'Horizontal']], inherits: true },
  { name: 'Content Rows 2-8', opt: '<br>(optional)' },
  { name: 'Supporting Text', opt: '(optional)', style: 'Body Small', token: 'vds-color-element-secondary-onSurface()' },
  { name: 'CTA Button Group', opt: '<br>(optional)' },
  { name: 'Primary CTA', ...button('primary') },
  { name: 'Secondary CTA', ...button('secondary') },
  { name: 'Tertiary CTA', opt: '(optional)', uses: '[VDS] Text Link', rows: [['size', 'large']], exposes: ['Label'], inherits: true },
  { name: 'Footnote', opt: '(optional)', uses: '[VDS] Footnote', exposes: ['Text', 'ID number'], inherits: true }
];
document.getElementById('anatomy-specs').innerHTML = anatomy.map((s, i) => `
  <div class="spec"><div class="marker">${i + 1}</div><div class="name"><b>${s.name}</b> <span>${s.opt || ''}</span></div>${specBody(s)}</div>`).join('');

// [number, marker x, marker y, line end x]
const marks = [[2, -7, 6, 4], [3, -7, 28, -2], [8, -7, 68, 4], [9, -7, 94, 4], [10, -7, 112, 4], [14, -7, 129, 4],
  [4, 67, 16, 56], [5, 67, 25, 56], [6, 67, 37, 56], [7, 67, 47, 4], [11, 67, 103, 56], [12, 67, 113, 56], [13, 67, 121, 56]];
const outlines = [[4, 4, 4], [4, 11, 10], [4, 23, 4], [4, 51, 37], [4, 91, 4], [4, 99, 25], [4, 127, 4]];
document.getElementById('anatomy-marks').innerHTML =
  outlines.map(o => `<rect x="${o[0]}" y="${o[1]}" width="52" height="${o[2]}" fill="none" stroke="#9cc3e6" stroke-width=".5" stroke-dasharray="1 1"/>`).join('') +
  '<path d="M0 11H-2V48H0M30-4V0" fill="none" stroke="#3d86cc" stroke-width=".6"/><circle cx="30" cy="-4" r="2" fill="#1f6fc4"/><text x="30" y="-3">1</text>' +
  marks.map(m => `<path d="M${m[1]} ${m[2]}H${m[3]}" stroke="#5b9bd5" stroke-width=".6"/><circle cx="${m[1]}" cy="${m[2]}" r="2" fill="#1f6fc4"/><text x="${m[1]}" y="${m[2] + 1}">${m[0]}</text>`).join('');

const teal = '#bfe7db';
const lime = '#cbe7a3';
const orange = '#f8dba6';
const gaps = [[13, 4, teal], [21, 3, teal], [34, 2, lime], [40, 2, lime], [57, 2, lime], [60, 4, teal], [74, 2, lime], [80, 2, lime],
  [97, 2, lime], [100, 4, teal], [108, 4, teal], [120, 2, orange], [130, 2, orange], [137, 3, teal]];
document.getElementById('spacing-marks').innerHTML = gaps.map(g =>
  `<rect x="0" y="${g[0]}" width="60" height="${g[1]}" fill="${g[2]}"/><rect x="-4" y="${g[0] + 1}" width="3" height="1" fill="#d9636b"/><path d="M-.500 ${g[0]}v${g[1]}" stroke="#8fb8ae" stroke-width=".5"/>`).join('');

// configurations
const full = 'eyebrow row support primary secondary link footnote';
const configs = [
  { name: 'surface', lead: 'Widget is only used on Light Brand Neutral and Dark Primary. For more information see <a href="#">Surface Color Design Tokens</a>.',
    left: { show: full, cap: '<b>Light surface</b><p>Light Brand Neutral</p>' },
    right: { show: full, dark: true, cap: '<b>Dark surface</b><p>Dark Primary</p>', spec: { uses: '[VDS] Tile Container', rows: [['Background', 'Light - Secondary']] } } },
  { name: 'showNotification',
    left: { show: full, cap: '<b>false</b> (default)' },
    right: { show: 'notification ' + full, cap: '<b>true</b>', spec: { uses: '[VDS] Notification', rows: [['Viewport', 'Mobile'], ['fullBleed', 'false'], ['Buttons', 'false'], ['Body Text', 'false'], ['showCloseButton', 'false']], exposes: ['Type', 'Title'], inherits: true } } },
  { name: 'showEyebrow',
    left: { show: full, cap: '<b>true</b> (default)' },
    right: { show: full.replace('eyebrow ', ''), cap: '<b>false</b>' } },
  { name: 'showBadge',
    left: { show: full, cap: '<b>false</b> (default)' },
    right: { show: 'badge ' + full, cap: '<b>true</b>', spec: { uses: '[VDS] Badge', exposes: ['backgroundColor', 'Text', 'tooltip'], inherits: true } } },
  { name: 'showTitleLockup',
    left: { show: full, cap: '<b>true</b> (default)' },
    right: { show: full + ' notitle', cap: '<b>false</b>' } },
  { name: 'showBodyText',
    left: { show: full, cap: '<b>true</b> (default)' },
    right: { show: full + ' nobody', cap: '<b>false</b>' } }
];

function configSide(c) {
  return `<div><div class="stage${c.dark ? ' stage-dark' : ''}"><div class="widget${c.dark ? ' dark' : ''}" data-show="${c.show}"></div></div>
    <div class="caption">${c.cap}</div>${c.spec ? `<div class="spec">${specBody(c.spec)}</div>` : ''}</div>`;
}
document.getElementById('configs').innerHTML = configs.map(c => `
  <section class="block"><h3>${c.name}</h3>${c.lead ? `<p class="lead">${c.lead}</p>` : ''}
  <div class="pair">${configSide(c.left)}${configSide(c.right)}</div></section>`).join('') +
  '<section class="block preview"><h3>showLine</h3><div class="pair"><div class="stage"></div><div class="stage"></div></div></section>';

// row variants
const variants = ['', 'pad-slot', 'pad-slot pad-line', 'pad-line', ''];
document.getElementById('rows').innerHTML = variants.map(v =>
  [slotNarrow, slotWide].map(l => row(() => false, l).replace('w-row', 'w-row ' + v)).join('')).join('');

// steps: property panels, "1" on, "0" off, "=" text value, "#" and ":" long text, ">" drop-down, "-" heading; a leading * marks a highlighted line
const rowProps = ['- Row 1', '1 Content Padding Left Right', '0 Content Padding Top', '0 Content Padding Bottom', '0 Row Padding Bottom'];
const contentTop = eyebrow => ['1 Auto-on Light Surface', '- Widget/Content', '> spacingBelowContent|16', '0 spacingNone', '0 showNotification', '1 Show Eyebrow + Badge', '1 showEyebrow', `${eyebrow}`, '0 showBadge'];
const rowList = mark => [1, 2, 3, 4, 5, 6, 7, 8].map(n => `${mark}${n === 1 ? 1 : 0} Row ${n}`);
const ctaProps = ['1 Show Buttons + Footnote', '1 Show CTA Buttons', '1 showButtonSecondary'];
const padProps = ['1 Padding Top 16', '1 Padding Bottom 16'];

const steps = [
  { text: 'Place an instance of <b>[CHAT] Widget</b> in your file.', show: 'eyebrow row row support primary secondary link footnote', panels: [] },
  { text: 'Toggle on or off additional Content Rows as needed.', show: full, panels: [
    { h: 236, rows: [...contentTop('= Eyebrow Text|Eyebrow'), ...rowList('*'), '1 showSupportingText', '= Supporting Text|Supporting text', ...ctaProps, '1 showTextLink', '1 showFootnote', ...padProps,
      ...rowProps, '1 showTitleLockup', '1 showBodyText', '1 showCustomContent', '1 showLine', '= Body Text|Body text', '> ‹› Custom Slot|◇ Custom Slot'] }] },
  { text: 'Swap Custom Slot with the relevant content type (e.g. List).', show: 'eyebrow listrow support primary secondary link footnote', panels: [
    { h: 71, rows: [...rowProps, '1 showTitleLockup', '1 showBodyText', '1 showCustomContent', '1 showLine', '= Body Text|Body text', '*> ‹› Custom Slot|◇ [CHAT] List'] }] },
  { text: 'Toggle on or off additional content types.', show: 'eyebrow list support primary secondary', panels: [
    { h: 170, rows: [...contentTop('= Eyebrow Text|Eyebrow'), ...rowList(''), '1 showSupportingText', '= Supporting Text|Supporting text', ...ctaProps, '*0 showTextLink', '*0 showFootnote', ...padProps] },
    { h: 65, rows: [...rowProps, '*0 showTitleLockup', '*0 showBodyText', '*1 showCustomContent', '*0 showLine', '> ‹› Custom Slot|◇ [CHAT] List'] }] },
  { text: 'Edit content as needed.', show: 'change', panels: [
    { h: 180, rows: [...contentTop('*= Eyebrow Text|Change of email'), ...rowList(''), '1 showSupportingText', '*# Supporting Text|By selecting Confirm\nyou agree to receive all\nelectronic\ncommunications at the', ...ctaProps, '0 showTextLink', '0 showFootnote', ...padProps] },
    { h: 229, rows: ['- [CHAT] Content', '> Alignment|middle', '> Pairing|Body SM + Body SM', '1 Title Bold', '1 Eyebrow Color Secondary', '0 Subtitle Color Secondary', '1 Body Color Secondary', '0 showOverBadge', '0 showOverEyebrow', '1 Title Content', '0 showBadge', '0 showEyebrow', '0 showNumberIcon', '1 showTitleLockup', '0 showTitle Price Lockup', '1 showTitle',
      '*= Title Text|New email', '0 showSubtitle', '0 showTertiaryTitle', '0 Body Content', '0 Leading Content', '1 Trailing Content', '0 showTrailingBadge', '0 showTagText', '0 showTagMobile', '0 showTrailingImage', '0 showTrailingIcon', '1 showMetaText', '*: Meta Text|verizoncustomer@gmai\nl.com',
      '0 showTrailing Price Lockup', '0 showTrailingLine', '0 showTrailingButton', '0 showToggle', '1 showInsetOfContent', '0 showCustomContent'] },
    { h: 91, rows: ['- [CHAT] Button', '> kind|Primary', '> size|large', '> State|Default', '> Width|Fill Container', '*= Label|Confirm', '0 showIcon', '- [CHAT] Button', '> kind|Secondary', '> size|large', '> State|Default', '> Width|Fill Container', '*= Label|View profile', '*1 showIcon'] }] },
  { text: 'If you require dark mode, toggle off Auto-on Light Surface.', show: 'change', dark: true, panels: [
    { h: 71, rows: ['*0 Auto-on Light Surface', ...contentTop('= Eyebrow Text|Change of email').slice(1), '1 Row 1', '0 Row 2'] }] }
];

function prop(line, prev, next) {
  const on = s => s && s[0] === '*';
  const cls = on(line) ? ` picked${on(prev) ? '' : ' picked-first'}${on(next) ? '' : ' picked-last'}` : '';
  const text = line.replace('*', '');
  const [label, value] = text.slice(2).split('|');
  const kind = text[0];
  let control = '';
  if (kind === '1' || kind === '0') control = `<input type="checkbox"${kind === '1' ? ' checked' : ''}>`;
  if (kind === '=') control = `<input type="text" value="${value}">`;
  if (kind === '>') control = `<select><option>${value}</option></select>`;
  if (kind === '#' || kind === ':') control = `<textarea>${value}</textarea>`;
  const tag = control ? 'label' : 'div';
  const tall = kind === '#' ? ' prop-tall' : kind === ':' ? ' prop-mid' : '';
  return `<${tag} class="prop${cls}${tall}"><span>${label}</span>${control}</${tag}>`;
}

document.getElementById('steps').innerHTML = steps.map((s, i) => `
  <section class="step"><h3>Step 0${i + 1}</h3><p>${s.text}</p>
    <div class="step-body">
      <div class="bezel${s.dark ? ' bezel-dark' : ''}"><div class="widget${s.dark ? ' dark' : ''}" data-show="${s.show}"></div></div>
      ${s.panels.map(p => `<div class="props" style="height:${p.h}px">${p.rows.map((r, n) => prop(r, p.rows[n - 1], p.rows[n + 1])).join('')}</div>`).join('')}
    </div></section>`).join('');

// phones
const phoneTop = `<div class="status"><span>9:41</span><svg viewBox="0 0 28 6"><path d="M0 6V4h1.500v2ZM2.500 6V3H4v3ZM5 6V1.500h1.500V6ZM7.500 6V0H9v6ZM13 1.500Q16 -.500 19 1.500L16 6ZM21 1h6v4h-6Z"/></svg></div>
  <div class="toolbar"><svg viewBox="0 0 8 8"><path d="M8 4H1M4 1 1 4l3 3" fill="none" stroke="#000"/></svg><button class="pill">End chat</button><svg class="dots" viewBox="0 0 8 8"><path d="M3 0h2v2H3ZM3 3h2v2H3ZM3 6h2v2H3Z"/></svg></div>`;
const composer = `<div class="composer"><input type="text" placeholder="Chat with Verizon" aria-label="Chat with Verizon"><button aria-label="Voice"><svg viewBox="0 0 8 8"><path d="M3 0h2v5H3ZM1.500 4Q4 8 6.500 4M4 6v2" stroke="#000" stroke-width=".6"/></svg></button></div>`;

document.querySelectorAll('.phone').forEach(phone => {
  if (phone.dataset.phone === 'message') {
    phone.innerHTML = `${phoneTop}<div class="mine">I need to update my email<br>address.</div>
      <div class="theirs">Sure, I'd be happy to help with that.<br>Please enter your new email address<br>in this form.</div>
      <div class="widget" data-show="form"></div>${composer}`;
  } else {
    phone.innerHTML = `${phoneTop}<div class="widget" data-show="form"></div>
      <div class="suggestions">Suggestions<button class="pill">Change email address</button><button class="pill">Change other information</button><button class="pill">View full profile ↗</button></div>${composer}`;
  }
});

document.querySelectorAll('.widget').forEach(renderWidget);
```
